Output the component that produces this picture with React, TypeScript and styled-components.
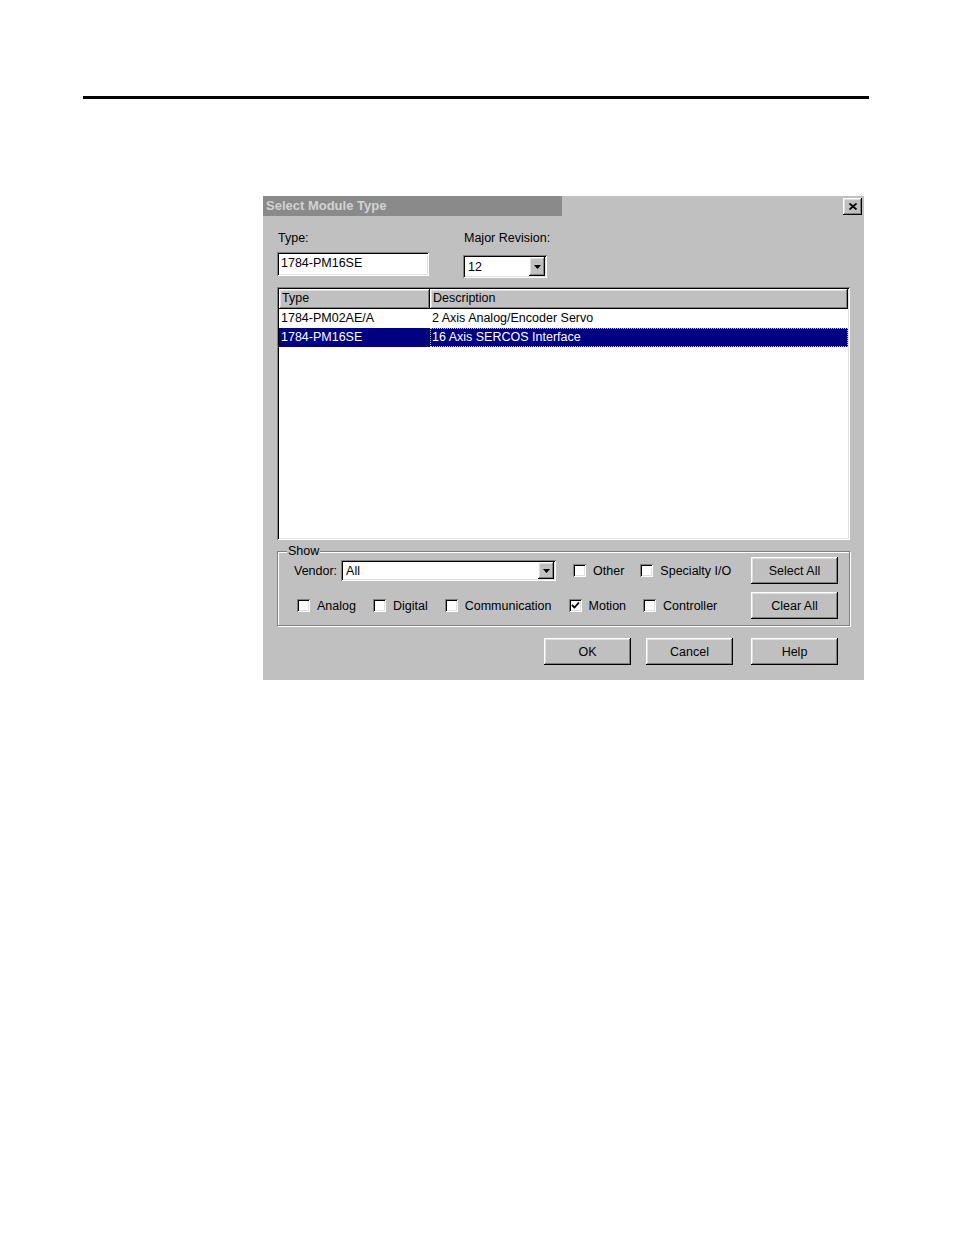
import { FC, ReactNode } from "react";
import styled, { css, createGlobalStyle } from "styled-components";

const GlobalStyle = createGlobalStyle`
    html, body {
        margin: 0;
        padding: 0;
        background: #ffffff;
    }
    body {
        font-family: "Liberation Sans", Arial, sans-serif;
    }
`;

const raised = css`
    background: #c0c0c0;
    box-shadow: inset -1px -1px 0 #000000, inset 1px 1px 0 #ffffff,
        inset -2px -2px 0 #808080, inset 2px 2px 0 #dfdfdf;
`;

const sunken = css`
    background: #ffffff;
    box-shadow: inset 1px 1px 0 #808080, inset -1px -1px 0 #ffffff,
        inset 2px 2px 0 #000000, inset -2px -2px 0 #dfdfdf;
`;

const Page = styled.div`
    width: 954px;
    min-height: 1235px;
    padding-top: 96px;
    box-sizing: border-box;
`;

const Rule = styled.div`
    margin-left: 83px;
    width: 786px;
    height: 3px;
    background: #000000;
`;

const Dialog = styled.div`
    margin: 97px 0 0 263px;
    width: 601px;
    height: 484px;
    background: #c0c0c0;
    display: flex;
    flex-direction: column;
    font-size: 12.5px;
    color: #000000;
`;

const TitleRow = styled.div`
    display: flex;
    justify-content: space-between;
    align-items: flex-start;
    height: 20px;
`;

const TitleBar = styled.div`
    width: 299px;
    height: 20px;
    padding-left: 3px;
    box-sizing: border-box;
    background: #8a8a8a;
    color: #d2d2d2;
    font-weight: bold;
    font-size: 13px;
    line-height: 20px;
`;

const CloseButton = styled.div`
    ${raised};
    width: 19px;
    height: 17px;
    margin: 2px 2px 0 0;
    display: flex;
    align-items: center;
    justify-content: center;
`;

const Body = styled.div`
    flex: 1;
    display: flex;
    flex-direction: column;
    padding: 15px 14px 0;
`;

const FieldsRow = styled.div`
    display: flex;
    gap: 34px;
`;

const Field = styled.div<{ $gap: number }>`
    display: flex;
    flex-direction: column;
    gap: ${(p) => p.$gap}px;
`;

const Label = styled.div`
    line-height: 14px;
    padding-left: 1px;
`;

const TextBox = styled.div`
    ${sunken};
    width: 152px;
    height: 24px;
    padding-left: 4px;
    box-sizing: border-box;
    line-height: 23px;
`;

const Combo = styled.div<{ $w: number; $h: number }>`
    ${sunken};
    width: ${(p) => p.$w}px;
    height: ${(p) => p.$h}px;
    padding: 2px;
    box-sizing: border-box;
    display: flex;
    align-items: stretch;
`;

const ComboValue = styled.div`
    flex: 1;
    padding-left: 3px;
    display: flex;
    align-items: center;
`;

const ArrowButton = styled.div`
    ${raised};
    width: 16px;
    display: flex;
    align-items: center;
    justify-content: center;
`;

const List = styled.div`
    ${sunken};
    margin-top: 9px;
    height: 253px;
    padding: 2px;
    box-sizing: border-box;
    display: flex;
    flex-direction: column;
`;

const columns = css`
    display: grid;
    grid-template-columns: 151px 1fr;
`;

const Header = styled.div`
    ${columns};
    height: 20px;
`;

const HeaderCell = styled.div`
    ${raised};
    padding-left: 3px;
    line-height: 19px;
`;

const Row = styled.div<{ $selected?: boolean }>`
    ${columns};
    height: 19px;
    line-height: 19px;
    background: ${(p) => (p.$selected ? "#000080" : "#ffffff")};
    color: ${(p) => (p.$selected ? "#ffffff" : "#000000")};
`;

const Cell = styled.div<{ $focus?: boolean }>`
    padding-left: ${(p) => (p.$focus ? 1 : 2)}px;
    white-space: nowrap;
    ${(p) =>
        p.$focus &&
        css`
            border: 1px dotted #c8c8c8;
            line-height: 17px;
        `}
`;

const Group = styled.fieldset`
    margin: 5px 0 0;
    padding: 0 11px 6px 16px;
    min-width: 0;
    border: 1px solid #808080;
    box-shadow: 1px 1px 0 #ffffff, inset 1px 1px 0 #ffffff;
`;

const Legend = styled.legend`
    margin-left: -7px;
    padding: 0 1px;
    line-height: 12px;
    background: #c0c0c0;
`;

const GroupRow = styled.div<{ $top?: number; $indent?: number }>`
    display: flex;
    align-items: center;
    height: 27px;
    margin-top: ${(p) => p.$top ?? 0}px;
    padding-left: ${(p) => p.$indent ?? 0}px;
`;

const VendorLabel = styled.span`
    margin-right: 4px;
`;

const CheckItem = styled.label<{ $ml: number }>`
    display: inline-flex;
    align-items: center;
    gap: 7px;
    margin-left: ${(p) => p.$ml}px;
`;

const Box = styled.span`
    ${sunken};
    width: 13px;
    height: 13px;
    display: inline-flex;
    align-items: center;
    justify-content: center;
`;

const Spacer = styled.div`
    flex: 1;
`;

const Button = styled.div<{ $ml?: number }>`
    ${raised};
    width: 87px;
    height: 27px;
    margin-left: ${(p) => p.$ml ?? 0}px;
    display: flex;
    align-items: center;
    justify-content: center;
`;

const ButtonRow = styled.div`
    display: flex;
    justify-content: flex-end;
    margin-top: 12px;
    padding-right: 12px;
`;

const DownArrow: FC = () => (
    <svg width="7" height="4" viewBox="0 0 7 4">
        <polygon points="0,0 7,0 3.5,4" fill="#000" />
    </svg>
);

const Check: FC<{ label: string; checked?: boolean; ml?: number }> = ({ label, checked, ml = 0 }) => (
    <CheckItem $ml={ml}>
        <Box>
            {checked && (
                <svg width="9" height="9" viewBox="0 0 9 9">
                    <polyline points="1,4 3.5,6.5 8,1.5" fill="none" stroke="#000" strokeWidth="1.8" />
                </svg>
            )}
        </Box>
        {label}
    </CheckItem>
);

const Select: FC<{ w: number; h: number; children: ReactNode }> = ({ w, h, children }) => (
    <Combo $w={w} $h={h}>
        <ComboValue>{children}</ComboValue>
        <ArrowButton>
            <DownArrow />
        </ArrowButton>
    </Combo>
);

const modules = [
    { type: "1784-PM02AE/A", description: "2 Axis Analog/Encoder Servo" },
    { type: "1784-PM16SE", description: "16 Axis SERCOS Interface" },
];

const App: FC = () => {
    return (
        <Page>
            <GlobalStyle />
            <Rule />
            <Dialog>
                <TitleRow>
                    <TitleBar>Select Module Type</TitleBar>
                    <CloseButton>
                        <svg width="8" height="7" viewBox="0 0 8 7">
                            <path d="M0.5 0.5 L7.5 6.5 M7.5 0.5 L0.5 6.5" stroke="#000" strokeWidth="1.8" />
                        </svg>
                    </CloseButton>
                </TitleRow>
                <Body>
                    <FieldsRow>
                        <Field $gap={7}>
                            <Label>Type:</Label>
                            <TextBox>1784-PM16SE</TextBox>
                        </Field>
                        <Field $gap={10}>
                            <Label>Major Revision:</Label>
                            <Select w={84} h={23}>12</Select>
                        </Field>
                    </FieldsRow>
                    <List>
                        <Header>
                            <HeaderCell>Type</HeaderCell>
                            <HeaderCell>Description</HeaderCell>
                        </Header>
                        {modules.map((m, i) => {
                            const selected = i === modules.length - 1;
                            return (
                                <Row key={m.type} $selected={selected}>
                                    <Cell>{m.type}</Cell>
                                    <Cell $focus={selected}>{m.description}</Cell>
                                </Row>
                            );
                        })}
                    </List>
                    <Group>
                        <Legend>Show</Legend>
                        <GroupRow>
                            <VendorLabel>Vendor:</VendorLabel>
                            <Select w={215} h={21}>All</Select>
                            <Check label="Other" ml={17} />
                            <Check label="Specialty I/O" ml={16} />
                            <Spacer />
                            <Button>Select All</Button>
                        </GroupRow>
                        <GroupRow $top={8} $indent={3}>
                            <Check label="Analog" />
                            <Check label="Digital" ml={17} />
                            <Check label="Communication" ml={17} />
                            <Check label="Motion" checked ml={17} />
                            <Check label="Controller" ml={17} />
                            <Spacer />
                            <Button>Clear All</Button>
                        </GroupRow>
                    </Group>
                    <ButtonRow>
                        <Button>OK</Button>
                        <Button $ml={15}>Cancel</Button>
                        <Button $ml={18}>Help</Button>
                    </ButtonRow>
                </Body>
            </Dialog>
        </Page>
    );
};

export default App;
